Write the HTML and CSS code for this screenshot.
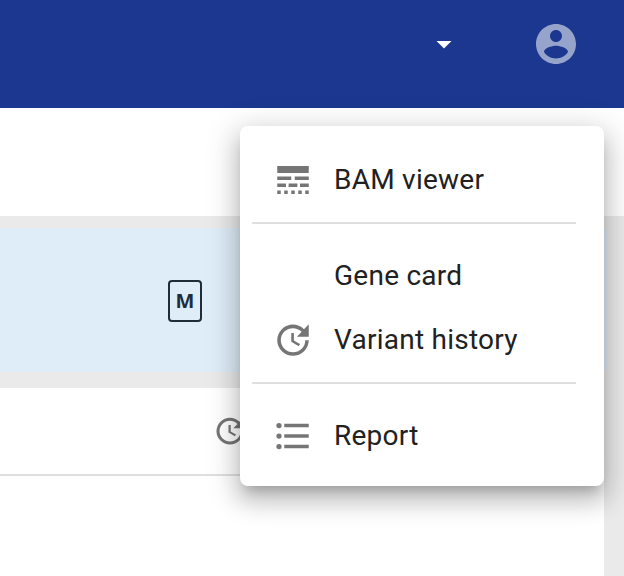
FILE: index.html
```html
<!DOCTYPE html>
<html lang="en">
<head>
<meta charset="utf-8">
<title>Variants</title>
<link rel="stylesheet" href="styles.css">
</head>
<body>
<svg class="sprite" aria-hidden="true">
  <symbol id="update" viewBox="0 0 24 24"><path d="M21 10.12h-6.78l2.74-2.82c-2.73-2.7-7.15-2.8-9.88-.1-2.73 2.71-2.73 7.08 0 9.79s7.15 2.71 9.88 0C18.32 15.65 19 14.08 19 12.1h2c0 1.98-.88 4.55-2.64 6.29-3.51 3.48-9.21 3.48-12.72 0-3.5-3.47-3.53-9.11-.02-12.58s9.14-3.47 12.65 0L21 3v7.12zM12.5 8v4.25l3.5 2.08-.72 1.21L11 13V8h1.5z"/></symbol>
</svg>
<header class="topbar">
  <svg class="caret" viewBox="0 0 16 8"><path d="M.5 0h15L8 7.5z"/></svg>
  <svg class="account" viewBox="0 0 24 24"><path d="M12 2C6.48 2 2 6.48 2 12s4.48 10 10 10 10-4.48 10-10S17.52 2 12 2zm0 3c1.66 0 3 1.34 3 3s-1.34 3-3 3-3-1.34-3-3 1.34-3 3-3zm0 14.2c-2.5 0-4.71-1.28-6-3.22.03-1.99 4-3.08 6-3.08 1.99 0 5.97 1.09 6 3.08-1.29 1.94-3.5 3.22-6 3.22z"/></svg>
</header>
<div class="toolbar"></div>
<main class="content">
  <section class="variant"><span class="badge">M</span></section>
  <section class="panel">
    <div class="panel-head"><svg class="history"><use href="#update"/></svg></div>
  </section>
</main>
<nav class="menu">
  <a class="item">
    <svg class="icon" viewBox="0 0 24 24"><path d="M3 4h18v4H3zM3 10h8v2H3zM13 10h8v2h-8zM3 14h5v2H3zM9.5 14h5v2h-5zM16 14h5v2h-5zM3 18h2v2H3zM7 18h2v2H7zM11 18h2v2h-2zM15 18h2v2h-2zM19 18h2v2h-2z"/></svg>
    <span>BAM viewer</span>
  </a>
  <hr class="divider">
  <a class="item"><span class="icon"></span><span>Gene card</span></a>
  <a class="item"><svg class="icon"><use href="#update"/></svg><span>Variant history</span></a>
  <hr class="divider">
  <a class="item">
    <svg class="icon" viewBox="0 0 24 24"><circle cx="4" cy="6" r="1.5"/><circle cx="4" cy="12" r="1.5"/><circle cx="4" cy="18" r="1.5"/><path d="M7 5h14v2H7zM7 11h14v2H7zM7 17h14v2H7z"/></svg>
    <span>Report</span>
  </a>
</nav>
</body>
</html>
```

FILE: styles.css
```css
* { box-sizing: border-box; }

body {
  margin: 0;
  height: 576px;
  display: flex;
  flex-direction: column;
  overflow: hidden;
  font-family: Roboto, sans-serif;
  background: #eaeaea;
}

.sprite { position: absolute; width: 0; height: 0; }

.topbar {
  height: 108px;
  flex: none;
  display: flex;
  justify-content: flex-end;
  align-items: flex-start;
  gap: 80px;
  padding: 20px 44px 0 0;
  background: #1c378f;
}

.caret { width: 16px; height: 8px; margin-top: 21px; fill: #fff; }
.account { width: 48px; height: 48px; fill: #fff; fill-opacity: .54; }

.toolbar { height: 108px; flex: none; background: #fff; }

.content {
  flex: 1;
  display: flex;
  flex-direction: column;
  gap: 16px;
  padding-top: 12px;
}

.variant {
  height: 144px;
  flex: none;
  display: flex;
  align-items: center;
  margin-right: 16px;
  padding: 2px 0 0 168px;
  border-radius: 0 8px 8px 0;
  background: #dfedf8;
}

.badge {
  width: 34px;
  height: 42px;
  border: 2px solid #1f2d3a;
  border-radius: 4px;
  color: #1f2d3a;
  font-family: "Open Sans", sans-serif;
  font-size: 20px;
  font-weight: 700;
  line-height: 38px;
  text-align: center;
}

.panel { flex: 1; margin-right: 20px; background: #fff; }

.panel-head {
  height: 88px;
  display: flex;
  align-items: center;
  padding-left: 212px;
  border-bottom: 2px solid #dfdfdf;
}

.history { width: 36px; height: 36px; fill: #757575; }

.menu {
  position: absolute;
  left: 240px;
  top: 126px;
  width: 364px;
  height: 360px;
  padding: 22px 28px 18px 12px;
  border-radius: 8px;
  background: #fff;
  box-shadow: 0 10px 12px -6px rgba(0, 0, 0, .2),
    0 14px 22px 3px rgba(0, 0, 0, .15),
    0 6px 32px 6px rgba(0, 0, 0, .13);
}

.item {
  height: 64px;
  display: flex;
  align-items: center;
  gap: 20px;
  padding-left: 20px;
  color: #212121;
  font-size: 28px;
  line-height: 64px;
  letter-spacing: .25px;
  white-space: nowrap;
}

.icon { width: 42px; height: 42px; flex: none; fill: #757575; }

.divider {
  height: 2px;
  margin: 10px 0 20px;
  border: 0;
  background: #dfdfdf;
}
```
